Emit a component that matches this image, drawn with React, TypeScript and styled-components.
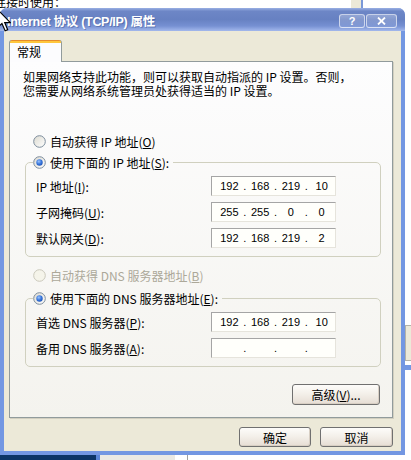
import { Fragment } from 'react'
import { createGlobalStyle, styled } from 'styled-components'

const GlobalStyle = createGlobalStyle`
  html, body {
    margin: 0;
    padding: 0;
    background: #fff;
  }
  body {
    font-family: "Noto Sans CJK SC", sans-serif;
    font-size: 12px;
    color: #000;
  }
  * { box-sizing: border-box; }
`

const Desktop = styled.div`
  position: relative;
  width: 411px;
  height: 460px;
  overflow: hidden;
  background: #fff;
  display: flex;
  flex-direction: column;
`

const TopBackdrop = styled.div`
  height: 8px;
  flex: 0 0 8px;
  display: flex;
  overflow: hidden;
`

const BackLabel = styled.div`
  flex: 0 0 357px;
  margin: -4px 0 0 -6px;
  line-height: 12px;
  white-space: nowrap;
`

const BackStrip = styled.div`
  width: 12px;
  background: #ece9d8;
  border-right: 2px solid #7a98d8;
`

const Middle = styled.div`
  display: flex;
  height: 447px;
  flex: 0 0 447px;
`

const RightGutter = styled.div`
  flex: 1;
  display: flex;
  flex-direction: column;
`

const GutterBox = styled.div`
  margin-top: 317px;
  height: 36px;
  border: 1px solid #b4b2a8;
  border-right: none;
  background: #ece9d8;
`

const GutterFrame = styled.div`
  margin-top: 4px;
  height: 5px;
  background: #7397e2;
`

const BottomBackdrop = styled.div`
  flex: 1;
  display: flex;
`

const Strip = styled.div<{ $w: number; $c: string }>`
  width: ${p => p.$w}px;
  background: ${p => p.$c};
`

const Window = styled.div`
  flex: 0 0 405px;
  display: flex;
  flex-direction: column;
  background: #7397e2;
  border-radius: 7px 7px 0 0;
  overflow: hidden;
`

const TitleBar = styled.div`
  flex: 0 0 23px;
  display: flex;
  align-items: center;
  padding: 2px 8px 0 7px;
  background: linear-gradient(180deg, #9ab0e4 0%, #6d86c6 14%, #6781c2 50%, #7690d2 78%, #a3b8ec 100%);
`

const Title = styled.div`
  flex: 1;
  color: #fff;
  font-family: "Liberation Sans", "Noto Sans CJK SC", sans-serif;
  font-weight: 700;
  font-size: 12.5px;
  letter-spacing: -0.3px;
  white-space: nowrap;
  text-shadow: 1px 1px 0 rgba(40, 60, 120, 0.35);
`

const TitleButtons = styled.div`
  display: flex;
  gap: 1px;
`

const TitleButton = styled.div<{ $w: number }>`
  width: ${p => p.$w}px;
  height: 14px;
  border: 1px solid rgba(255, 255, 255, 0.6);
  border-radius: 3px;
  background: linear-gradient(180deg, rgba(255, 255, 255, 0.28), rgba(255, 255, 255, 0.06));
  display: flex;
  align-items: center;
  justify-content: center;
  color: #fff;
  font: 700 11px "Liberation Sans", sans-serif;
`

const Body = styled.div`
  flex: 1;
  margin: 0 4px 4px;
  background: #ece9d8;
  padding: 9px 8px 0 5px;
  display: flex;
  flex-direction: column;
`

const TabStrip = styled.div`
  display: flex;
  height: 22px;
  margin-bottom: -1px;
  position: relative;
  z-index: 1;
`

const Tab = styled.div`
  height: 22px;
  padding: 4px 20px 0 7px;
  border-left: 1px solid #919b9c;
  border-right: 1px solid #919b9c;
  border-radius: 3px 3px 0 0;
  background: linear-gradient(180deg, #e68b2c 0 1px, #ffc73c 1px 3px, #fcfcfe 3px);
  line-height: 15px;
`

const Panel = styled.div`
  height: 357px;
  flex: 0 0 357px;
  border: 1px solid #919b9c;
  background: linear-gradient(180deg, #fdfdfe 0%, #f4f3ee 100%);
  box-shadow: 1px 1px 0 #d2cfc0;
  padding: 8px 0 0 13px;
  display: flex;
  flex-direction: column;
  align-items: flex-start;
`

const Description = styled.p`
  margin: 0;
  line-height: 14px;
  white-space: nowrap;
`

const OptionRow = styled.div<{ $disabled?: boolean; $top?: number }>`
  display: flex;
  align-items: center;
  gap: 4px;
  height: 16px;
  margin: ${p => p.$top ?? 0}px 0 0 ${p => (p.$top === undefined ? 0 : 10)}px;
  color: ${p => (p.$disabled ? '#aca899' : '#000')};
  white-space: nowrap;
`

const GroupBox = styled.fieldset<{ $top: number }>`
  margin: ${p => p.$top}px 0 0 2px;
  width: 356px;
  min-width: 0;
  padding: 6px 0 8px 7px;
  border: 1px solid #d0d0bf;
  border-radius: 5px;
`

const GroupLegend = styled.legend`
  margin: 0;
  padding: 0 4px 0 0;
`

const FieldRow = styled.div`
  display: flex;
  align-items: center;
  height: 20px;
  padding-left: 3px;
  white-space: nowrap;

  & + & { margin-top: 6px; }
`

const FieldLabel = styled.span`
  width: 175px;
`

const IpBox = styled.div`
  width: 125px;
  height: 20px;
  display: flex;
  align-items: center;
  padding-left: 4px;
  border: 1px solid;
  border-color: #a5a5a5 #e6e4dc #e6e4dc #a5a5a5;
  background: #fffffb;
  font-family: "Liberation Sans", sans-serif;
  font-size: 11px;
`

const Octet = styled.span`
  width: 27px;
  text-align: center;
`

const Dot = styled.span`
  width: 4px;
  text-align: center;
`

const ActionRow = styled.div`
  width: 356px;
  margin: 17px 0 0 2px;
  padding-right: 1px;
  display: flex;
  justify-content: flex-end;
`

const Button = styled.button<{ $w: number; $h: number }>`
  width: ${p => p.$w}px;
  height: ${p => p.$h}px;
  padding: 0;
  border: 1px solid #707070;
  border-radius: 3px;
  background: linear-gradient(180deg, #fdfcfa 0%, #f4f0ea 45%, #e6ddd4 100%);
  box-shadow: inset -1px -1px 0 #d8cfc4;
  font-family: "Noto Sans CJK SC", sans-serif;
  font-size: 12px;
  color: #000;
  white-space: nowrap;
`

const Footer = styled.div`
  display: flex;
  justify-content: flex-end;
  gap: 9px;
  margin-top: 9px;
`

const Cursor = styled.svg`
  position: absolute;
  left: -3px;
  top: 9px;
`

function Radio({ checked, disabled }: { checked?: boolean; disabled?: boolean }) {
  return (
    <svg width="13" height="13" viewBox="0 0 13 13">
      <defs>
        <linearGradient id="rfill" x1="0" y1="0" x2="1" y2="1">
          <stop offset="0" stopColor="#dcdad0" />
          <stop offset="1" stopColor="#ffffff" />
        </linearGradient>
        <radialGradient id="rdot" cx="0.4" cy="0.35" r="0.7">
          <stop offset="0" stopColor="#9cc4ff" />
          <stop offset="0.55" stopColor="#3a78dc" />
          <stop offset="1" stopColor="#1d52b8" />
        </radialGradient>
      </defs>
      <circle
        cx="6.5"
        cy="6.5"
        r="5.8"
        fill={disabled ? '#f5f4ea' : 'url(#rfill)'}
        stroke={disabled ? '#cac8bb' : '#7c8c9c'}
        strokeWidth="1"
      />
      {checked && <circle cx="6.5" cy="6.5" r="3.2" fill="url(#rdot)" />}
    </svg>
  )
}

function IpField({ parts }: { parts: string[] }) {
  return (
    <IpBox>
      {parts.map((p, i) => (
        <Fragment key={i}>
          {i > 0 && <Dot>.</Dot>}
          <Octet>{p}</Octet>
        </Fragment>
      ))}
    </IpBox>
  )
}

export default function App() {
  return (
    <>
      <GlobalStyle />
      <Desktop>
        <TopBackdrop>
          <BackLabel>连接时使用：</BackLabel>
          <BackStrip />
        </TopBackdrop>
        <Middle>
          <Window>
            <TitleBar>
              <Title>Internet 协议 (TCP/IP) 属性</Title>
              <TitleButtons>
                <TitleButton $w={26}>?</TitleButton>
                <TitleButton $w={31}>
                  <svg width="9" height="8" viewBox="0 0 9 8">
                    <path d="M1 0.5 L8 7.5 M8 0.5 L1 7.5" stroke="#fff" strokeWidth="1.8" />
                  </svg>
                </TitleButton>
              </TitleButtons>
            </TitleBar>
            <Body>
              <TabStrip>
                <Tab>常规</Tab>
              </TabStrip>
              <Panel>
                <Description>
                  如果网络支持此功能，则可以获取自动指派的 IP 设置。否则，
                  <br />
                  您需要从网络系统管理员处获得适当的 IP 设置。
                </Description>

                <OptionRow $top={35}>
                  <Radio />
                  <span>自动获得 IP 地址(<u>O</u>)</span>
                </OptionRow>

                <GroupBox $top={5}>
                  <GroupLegend>
                    <OptionRow>
                      <Radio checked />
                      <span>使用下面的 IP 地址(<u>S</u>):</span>
                    </OptionRow>
                  </GroupLegend>
                  <FieldRow>
                    <FieldLabel>IP 地址(<u>I</u>):</FieldLabel>
                    <IpField parts={['192', '168', '219', '10']} />
                  </FieldRow>
                  <FieldRow>
                    <FieldLabel>子网掩码(<u>U</u>):</FieldLabel>
                    <IpField parts={['255', '255', '0', '0']} />
                  </FieldRow>
                  <FieldRow>
                    <FieldLabel>默认网关(<u>D</u>):</FieldLabel>
                    <IpField parts={['192', '168', '219', '2']} />
                  </FieldRow>
                </GroupBox>

                <OptionRow $top={10} $disabled>
                  <Radio disabled />
                  <span>自动获得 DNS 服务器地址(<u>B</u>)</span>
                </OptionRow>

                <GroupBox $top={7}>
                  <GroupLegend>
                    <OptionRow>
                      <Radio checked />
                      <span>使用下面的 DNS 服务器地址(<u>E</u>):</span>
                    </OptionRow>
                  </GroupLegend>
                  <FieldRow>
                    <FieldLabel>首选 DNS 服务器(<u>P</u>):</FieldLabel>
                    <IpField parts={['192', '168', '219', '10']} />
                  </FieldRow>
                  <FieldRow>
                    <FieldLabel>备用 DNS 服务器(<u>A</u>):</FieldLabel>
                    <IpField parts={['', '', '', '']} />
                  </FieldRow>
                </GroupBox>

                <ActionRow>
                  <Button $w={88} $h={21}>高级(<u>V</u>)...</Button>
                </ActionRow>
              </Panel>
              <Footer>
                <Button $w={72} $h={20}>确定</Button>
                <Button $w={73} $h={20}>取消</Button>
              </Footer>
            </Body>
          </Window>
          <RightGutter>
            <GutterBox />
            <GutterFrame />
          </RightGutter>
        </Middle>
        <BottomBackdrop>
          <Strip $w={96} $c="#0c3566" />
          <Strip $w={4} $c="#5a86d6" />
          <Strip $w={75} $c="#ebe9e3" />
          <Strip $w={12} $c="#ffffff" />
          <Strip $w={1} $c="#a0a0a0" />
        </BottomBackdrop>
        <Cursor width="14" height="23" viewBox="0 0 12 20">
          <path d="M0.5 0.5 L0.5 16 L4.2 12.6 L7 19 L9.2 18 L6.6 11.8 L11.5 11.8 Z" fill="#fff" stroke="#000" strokeWidth="1" />
        </Cursor>
      </Desktop>
    </>
  )
}
